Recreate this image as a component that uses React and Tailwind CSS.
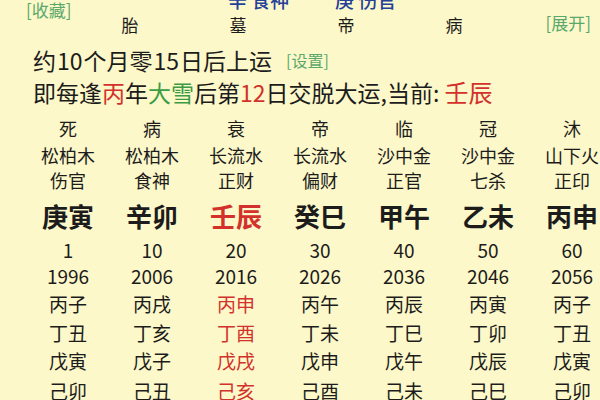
import React from "react";

const cols = [
  { ds: "死", ny: "松柏木", ss: "伤官", gz: "庚寅", age: "1", yr: "1996", ys: ["丙子", "丁丑", "戊寅", "己卯"] },
  { ds: "病", ny: "松柏木", ss: "食神", gz: "辛卯", age: "10", yr: "2006", ys: ["丙戌", "丁亥", "戊子", "己丑"] },
  { ds: "衰", ny: "长流水", ss: "正财", gz: "壬辰", age: "20", yr: "2016", ys: ["丙申", "丁酉", "戊戌", "己亥"], cur: true },
  { ds: "帝", ny: "长流水", ss: "偏财", gz: "癸巳", age: "30", yr: "2026", ys: ["丙午", "丁未", "戊申", "己酉"] },
  { ds: "临", ny: "沙中金", ss: "正官", gz: "甲午", age: "40", yr: "2036", ys: ["丙辰", "丁巳", "戊午", "己未"] },
  { ds: "冠", ny: "沙中金", ss: "七杀", gz: "乙未", age: "50", yr: "2046", ys: ["丙寅", "丁卯", "戊辰", "己巳"] },
  { ds: "沐", ny: "山下火", ss: "正印", gz: "丙申", age: "60", yr: "2056", ys: ["丙子", "丁丑", "戊寅", "己卯"] },
];

function Row({ cls, cells }) {
  return (
    <div className={"flex ml-[26px] " + cls}>
      {cells.map((c, i) => (
        <div key={i} className={"w-[84px] shrink-0 text-center whitespace-nowrap " + (c.red ? "text-[#d2322b]" : "")}>
          {c.t}
        </div>
      ))}
    </div>
  );
}

export default function App() {
  return (
    <div
      className="w-[600px] h-[400px] overflow-hidden bg-[#fcf8c9] text-[#1c1c1c]"
      style={{ fontFamily: '"Noto Sans CJK SC", "Noto Sans", sans-serif' }}
    >
      {/* top bits */}
      <div className="flex items-start h-[16px]">
        <div className="w-[228px] shrink-0 pl-[26px] text-[17px] leading-[19px] text-[#5aa86c]">[收藏]</div>
        <div className="w-[107px] shrink-0 -mt-[10px] text-[19px] leading-[20px] text-[#24409a] font-medium">辛 食神</div>
        <div className="shrink-0 -mt-[10px] text-[19px] leading-[20px] text-[#24409a] font-medium">庚 伤官</div>
      </div>
      <div className="flex items-center h-[18px] text-[17px] leading-[18px]">
        <div className="w-[76px] shrink-0" />
        {["胎", "墓", "帝", "病"].map((t) => (
          <div key={t} className="w-[108px] shrink-0 text-center">{t}</div>
        ))}
        <div className="ml-auto mr-[9px] -mt-[5px] text-[17px] text-[#5aa86c]">[展开]</div>
      </div>

      {/* qiyun lines */}
      <div className="flex items-center mt-[10px] h-[32px] pl-[33px] text-[23px] leading-[32px] whitespace-nowrap">
        <span>
          约<span className="mx-[1px]">10</span>个月零<span className="mx-[1px]">15</span>日后上运
        </span>
        <span className="ml-[14px] text-[16px] text-[#5aa86c]">[设置]</span>
      </div>
      <div className="h-[32px] pl-[33px] text-[23px] leading-[32px] whitespace-nowrap">
        即每逢<span className="text-[#d2322b]">丙</span>年<span className="text-[#3c9c45]">大雪</span>后第
        <span className="text-[#d2322b]">12</span>日交脱大运,当前: <span className="text-[#d2322b] text-[24px]">壬辰</span>
      </div>

      {/* dayun grid */}
      <div className="mt-[6px]">
        <Row cls="h-[29px] items-center text-[18px]" cells={cols.map((c) => ({ t: c.ds }))} />
        <Row cls="h-[25px] items-center text-[18px]" cells={cols.map((c) => ({ t: c.ny }))} />
        <Row cls="h-[25px] items-center text-[18px]" cells={cols.map((c) => ({ t: c.ss }))} />
        <Row cls="h-[44px] items-center text-[26px] font-bold" cells={cols.map((c) => ({ t: c.gz, red: c.cur }))} />
        <Row cls="h-[26px] items-center text-[19px]" cells={cols.map((c) => ({ t: c.age }))} />
        <Row cls="h-[27px] items-center text-[19px]" cells={cols.map((c) => ({ t: c.yr }))} />
        <Row cls="h-[29px] items-center text-[19px]" cells={cols.map((c) => ({ t: c.ys[0], red: c.cur }))} />
        <Row cls="h-[28px] items-center text-[19px]" cells={cols.map((c) => ({ t: c.ys[1], red: c.cur }))} />
        <Row cls="h-[29px] items-center text-[19px]" cells={cols.map((c) => ({ t: c.ys[2], red: c.cur }))} />
        <Row cls="h-[30px] items-center text-[19px]" cells={cols.map((c) => ({ t: c.ys[3], red: c.cur }))} />
      </div>
    </div>
  );
}
